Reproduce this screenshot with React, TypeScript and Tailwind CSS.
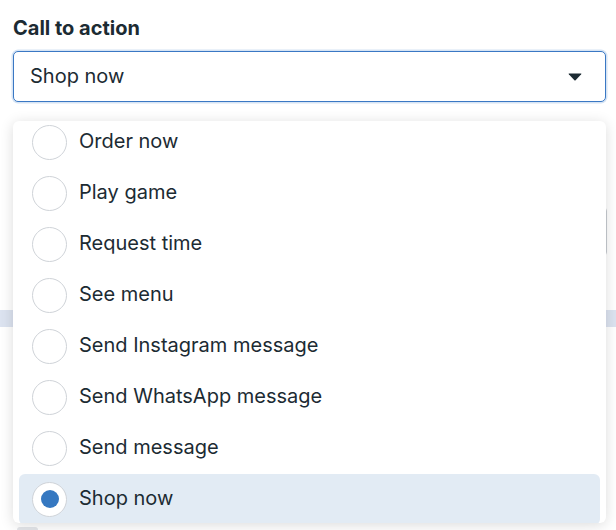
import React from "react";

const items = [
  "Order now",
  "Play game",
  "Request time",
  "See menu",
  "Send Instagram message",
  "Send WhatsApp message",
  "Send message",
  "Shop now",
];

export default function App() {
  const selected = "Shop now";
  return (
    <div
      className="relative w-[616px] h-[530px] overflow-hidden bg-white text-[#1c2b33]"
      style={{ fontFamily: "Inter, 'Noto Sans', sans-serif" }}
    >
      {/* background content behind popover */}
      <div className="absolute left-0 right-0 top-[310px] h-[17px] bg-[#dce3f0]" />
      <div className="absolute left-[13px] right-[9px] top-[207px] h-[49px] rounded border border-[#c8ccd1]" />
      <div className="absolute left-[17px] top-[527px] w-[21px] h-[6px] rounded-sm bg-[#e4e6ea]" />

      <div className="relative pl-[13px] pr-[10px] pt-[16px]">
        <div className="text-[20px] font-bold leading-[24px]">Call to action</div>
        <div className="mt-[11px] h-[51px] rounded-[5px] border border-[#3a78c4] shadow-[0_0_0_1.5px_#d6e4f4] bg-white flex items-center pl-[16px] pr-[23px]">
          <span className="text-[20px] flex-1 -mt-[2px]">Shop now</span>
          <svg width="14" height="8" viewBox="0 0 14 8">
            <path d="M1 0.5 H13 Q13.8 0.5 13.2 1.2 L7.6 7.2 Q7 7.8 6.4 7.2 L0.8 1.2 Q0.2 0.5 1 0.5 Z" fill="#1c2b33" />
          </svg>
        </div>

        <div className="mt-[19px] h-[402px] rounded-[6px] bg-white shadow-[0_2px_14px_rgba(0,0,0,0.14)] overflow-hidden">
          <div className="px-[6px] -mt-[4px]">
            {items.map((it) => {
              const sel = it === selected;
              return (
                <div
                  key={it}
                  className={`h-[51px] flex items-center gap-[12px] pl-[13px] rounded-[6px] ${sel ? "bg-[#e2ebf4]" : ""}`}
                >
                  <div className="w-[35px] h-[35px] -mt-[1px] rounded-full border border-[#cfd3d8] bg-white flex items-center justify-center">
                    {sel && <div className="w-[18px] h-[18px] rounded-full bg-[#3578c1]" />}
                  </div>
                  <span className="text-[20px] -mt-[3px]">{it}</span>
                </div>
              );
            })}
          </div>
        </div>
      </div>
    </div>
  );
}
